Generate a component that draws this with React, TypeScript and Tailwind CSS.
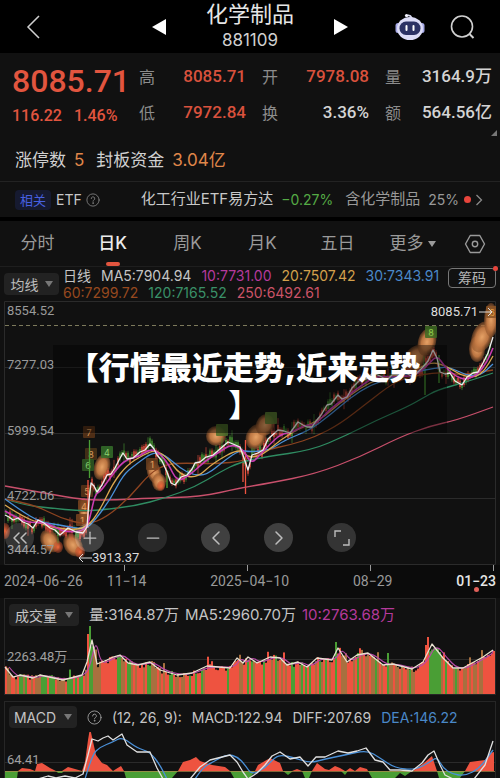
import React, { useState } from 'react';
import { ChevronLeft, ChevronRight, ChevronsLeft, Minus, Plus } from 'lucide-react';

type Point = [number, number];

const RED = '#ee5340';
const GREEN = '#4a9e35';
const MIXED = '#a8703f';

const ma5: Point[] = [[5,515],[9,517],[13,520],[18,518],[23,522],[28,524],[33,528],[38,520],[44,523],[50,528],[55,530],[60,535],[68,528],[76,532],[83,533],[87,527],[89,500],[91,483],[94,486],[97,492],[102,485],[107,475],[111,474],[115,468],[119,460],[123,453],[127,459],[133,458],[140,452],[145,450],[150,444],[154,449],[157,455],[162,461],[167,472],[171,483],[175,485],[181,477],[187,475],[192,469],[195,463],[200,462],[206,457],[213,455],[220,449],[228,442],[233,444],[240,447],[244,458],[248,470],[252,455],[258,453],[263,450],[268,439],[278,430],[284,431],[290,433],[298,422],[303,425],[307,427],[312,427],[316,421],[321,415],[327,405],[331,404],[338,395],[342,399],[347,397],[352,388],[360,380],[366,379],[373,373],[380,376],[387,380],[393,374],[400,375],[406,373],[413,377],[419,371],[423,367],[428,361],[433,350],[437,358],[440,372],[445,374],[450,373],[455,381],[462,385],[467,377],[473,373],[478,372],[483,363],[488,353],[493,337]];
const ma10: Point[] = [[5,511],[15,517],[30,523],[42,522],[55,527],[65,532],[85,531],[90,518],[95,494],[101,491],[110,478],[120,465],[128,459],[138,457],[150,449],[158,452],[168,463],[177,482],[190,475],[205,461],[218,453],[231,444],[243,449],[251,464],[260,455],[270,444],[281,434],[293,432],[305,425],[315,425],[330,409],[345,398],[362,385],[376,376],[392,377],[415,376],[427,366],[437,355],[444,366],[455,376],[466,380],[478,374],[487,362],[493,348]];
const ma20: Point[] = [[5,505],[20,515],[43,525],[67,530],[87,528],[100,510],[113,483],[127,465],[143,455],[155,450],[167,457],[180,475],[197,478],[213,463],[240,448],[248,458],[263,455],[280,440],[300,428],[320,420],[340,403],[360,388],[380,378],[410,373],[430,362],[445,365],[460,375],[475,378],[485,370],[493,356]];
const ma30: Point[] = [[5,499],[20,510],[40,522],[60,525],[85,530],[95,520],[110,500],[123,475],[135,465],[153,452],[165,455],[180,468],[193,475],[207,475],[225,460],[240,450],[250,452],[270,450],[285,440],[310,430],[330,415],[350,398],[370,385],[395,377],[415,372],[435,368],[450,367],[465,375],[480,376],[493,364]];
const ma60: Point[] = [[5,499],[33,504],[60,518],[87,525],[107,517],[130,497],[150,473],[167,464],[185,463],[215,464],[245,461],[265,450],[290,445],[315,437],[340,424],[367,403],[393,383],[410,377],[437,372],[463,375],[493,370]];
const ma120: Point[] = [[5,499],[23,505],[50,508],[80,511],[100,510],[135,506],[165,498],[195,487],[220,472],[240,462],[265,457],[312,450],[345,436],[377,420],[407,407],[423,398],[437,390],[463,383],[493,373]];
const ma250: Point[] = [[5,486],[45,493],[83,500],[117,500],[150,498],[200,497],[240,488],[270,483],[315,474],[360,457],[400,437],[430,426],[457,420],[493,407]];

const volumeMa: Point[] = [[5,667],[13,677],[20,675],[33,678],[40,675],[63,680],[82,675],[87,662],[92,640],[97,664],[107,660],[113,657],[120,655],[128,663],[138,665],[150,662],[160,670],[177,675],[192,673],[207,666],[230,668],[237,658],[243,663],[248,657],[257,663],[270,657],[280,658],[287,665],[298,662],[307,667],[317,658],[332,660],[338,648],[347,662],[357,655],[368,653],[383,665],[393,664],[412,669],[423,662],[432,644],[443,658],[453,668],[463,668],[472,663],[483,657],[493,650]];

const macdUp: Point[][] = [
  [[18,771],[22,768],[30,769],[35,771],[37,764],[42,763],[50,768],[56,771]],
  [[62,771],[68,767],[75,769],[82,771],[85,762],[88,740],[90,728],[92,737],[96,755],[102,763],[107,765],[113,771],[116,769],[121,766],[124,771]],
  [[178,771],[183,762],[190,760],[196,757],[200,761],[212,765],[225,767],[230,771]],
  [[255,771],[258,765],[270,758],[280,763],[283,771]],
  [[292,771],[297,769],[302,771]],
  [[312,771],[317,763],[325,769],[329,770],[335,766],[340,768],[345,771]],
  [[346,771],[350,768],[355,771],[360,767],[367,769],[368,771]],
  [[413,771],[424,763],[432,756],[437,771]],
  [[465,771],[470,762],[485,760],[490,753],[494,752],[494,771]],
];
const macdDown: Point[][] = [
  [[5,771],[18,771],[17,778],[5,778]],
  [[56,771],[64,771],[62,773],[58,773]],
  [[124,771],[178,771],[172,778],[126,778]],
  [[230,771],[255,771],[250,778],[234,778]],
  [[283,771],[293,771],[288,775]],
  [[302,771],[312,771],[309,778],[305,778]],
  [[341,771],[348,771],[345,775]],
  [[368,771],[412,771],[405,776],[400,773],[395,778],[372,778]],
  [[437,771],[465,771],[460,778],[439,778]],
];
const diff: Point[][] = [
  [[38,779],[48,776],[56,778],[65,776],[75,778],[83,774],[88,755],[92,739],[98,741],[103,738],[108,736],[113,740],[122,734],[127,745],[137,752],[150,752],[157,768],[163,779]],
  [[190,779],[200,767],[210,760],[222,757],[230,755],[237,762],[243,772],[248,779],[257,773],[265,765],[272,756],[280,752],[290,759],[300,757],[308,766],[316,757],[325,757],[338,751],[348,753],[357,751],[366,748],[375,760],[383,762],[390,770],[400,770],[412,771],[422,763],[428,755],[434,751],[440,765],[445,775],[453,779]],
  [[474,779],[485,765],[493,741]],
];
const dea: Point[][] = [
  [[85,779],[92,755],[100,747],[113,742],[122,737],[137,748],[150,752],[160,765],[167,779]],
  [[195,779],[203,767],[213,762],[227,754],[238,757],[245,765],[252,775],[265,768],[275,757],[282,755],[295,758],[310,763],[325,759],[345,755],[367,750],[380,758],[395,768],[415,770],[430,762],[437,757],[443,768],[452,774],[465,776],[480,768],[493,750]],
];

const toPoints = (points: Point[]) => points.map((p) => p.join(',')).join(' ');

const valueAt = (points: Point[], x: number) => {
  for (let i = 1; i < points.length; i++) {
    const [x0, y0] = points[i - 1];
    const [x1, y1] = points[i];
    if (x <= x1) return y0 + ((x - x0) / (x1 - x0)) * (y1 - y0);
  }
  return points[points.length - 1][1];
};

// Repeatable noise, so the candles look the same on every render
const noise = (n: number) => {
  const v = Math.sin(n * 12.9898) * 43758.5453;
  return v - Math.floor(v);
};

// Smooth curve through the points (quadratic, midpoints as joints)
const toCurve = (points: Point[], dx = 0) => {
  let d = `M${points[0][0] + dx} ${points[0][1]}`;
  for (let i = 1; i < points.length - 1; i++) {
    const mx = (points[i][0] + points[i + 1][0]) / 2;
    const my = (points[i][1] + points[i + 1][1]) / 2;
    d += `Q${points[i][0] + dx} ${points[i][1]} ${mx + dx} ${my}`;
  }
  const last = points[points.length - 1];
  return d + `L${last[0]} ${last[1]}`;
};

const candles = Array.from({ length: 243 }, (_, i) => {
  const x = 6 + i * 2;
  const y = valueAt(ma5, x) + (noise(i) - 0.5) * 6;
  const size = 1 + noise(i + 300) * 3;
  const wick = noise(i + 600) > 0.9 ? 7 : 2;
  return { x, y, size, wick, color: noise(i + 900) > 0.45 ? RED : GREEN };
});

const volumeBars = Array.from({ length: 245 }, (_, i) => {
  const x = 5 + i * 2;
  let top = valueAt(volumeMa, x) + (noise(i + 50) - 0.4) * 6;
  if (noise(i + 77) > 0.94) top -= 7;
  const n = noise(i + 41);
  let color = n > 0.5 ? RED : n > 0.2 ? MIXED : GREEN;
  if (x === 87) { top = 634; color = RED; }
  if (x === 89) { top = 626; color = GREEN; }
  if (x === 335) { top = 642; color = GREEN; }
  if (x === 387) { top = 653; color = GREEN; }
  if (x === 425) { top = 645; color = RED; }
  if (x === 427) { top = 637; color = RED; }
  if (x > 430 && x < 438) color = GREEN;
  if (x > 102 && x < 116) color = RED;
  if (x > 206 && x < 226) color = RED;
  if (x > 481) color = RED;
  return { x, top, color };
});

interface Blob {
  x: number;
  y: number;
  rx: number;
  ry: number;
  tilt?: number;
  hot?: boolean;
}

const blobs: Blob[] = [
  { x: 5, y: 531, rx: 5, ry: 8, hot: true },
  { x: 50, y: 541, rx: 9, ry: 12, tilt: -30 },
  { x: 58, y: 547, rx: 5, ry: 6, hot: true },
  { x: 73, y: 545, rx: 9, ry: 12, tilt: -30 },
  { x: 80, y: 552, rx: 5, ry: 6, hot: true },
  { x: 84, y: 512, rx: 5, ry: 14 },
  { x: 102, y: 467, rx: 8, ry: 13, tilt: 15 },
  { x: 154, y: 472, rx: 7, ry: 12, tilt: -15 },
  { x: 159, y: 482, rx: 7, ry: 9 },
  { x: 161, y: 486, rx: 4, ry: 5, hot: true },
  { x: 216, y: 436, rx: 10, ry: 10 },
  { x: 256, y: 437, rx: 10, ry: 13, tilt: 20 },
  { x: 265, y: 425, rx: 9, ry: 11, tilt: 20 },
  { x: 415, y: 358, rx: 10, ry: 15, tilt: 40 },
  { x: 427, y: 342, rx: 9, ry: 14, tilt: 15 },
  { x: 477, y: 349, rx: 8, ry: 13 },
  { x: 482, y: 337, rx: 10, ry: 16, tilt: 20 },
  { x: 491, y: 320, rx: 7, ry: 17 },
];

const badges = [
  { x: 89, y: 432, text: '7', fill: '#5a3418', ink: '#d99a5c' },
  { x: 91, y: 454, text: '8', fill: '#4a3418', ink: '#d99a5c' },
  { x: 88, y: 465, text: '6', fill: '#2f5a22', ink: '#7fc46a' },
  { x: 107, y: 452, text: '4', fill: '#35702a', ink: '#8fd070' },
  { x: 87, y: 491, text: '5', fill: '#5a3418', ink: '#d99a5c' },
  { x: 84, y: 506, text: '4', fill: '#7a4420', ink: '#e8a060' },
  { x: 82, y: 520, text: '1', fill: '#7a4420', ink: '#e8a060' },
  { x: 152, y: 464, text: '1', fill: '#6a3e1e', ink: '#e8a060' },
  { x: 222, y: 430, text: '', fill: '#4c702a', ink: '#a0b060' },
  { x: 271, y: 418, text: '', fill: '#5c8032', ink: '#a0b060' },
  { x: 431, y: 332, text: '8', fill: '#3d6a22', ink: '#8fd04a' },
  { x: 492, y: 312, text: '6', fill: '#8a5426', ink: '#e8a040' },
];

const Caret = () => (
  <svg viewBox="0 0 8 6" className="h-[6px] w-2 shrink-0" fill="currentColor">
    <path d="M0 0h8L4 6z" />
  </svg>
);

const Help = ({ className = '' }: { className?: string }) => (
  <svg viewBox="0 0 16 16" className={`shrink-0 ${className}`} fill="none" stroke="currentColor" strokeLinecap="round">
    <circle cx="8" cy="8" r="7" />
    <path d="M6 6.4a2 2 0 1 1 3 1.7c-.7.4-1 .7-1 1.4" />
    <circle cx="8" cy="11.5" r=".4" fill="currentColor" />
  </svg>
);

const Robot = () => (
  <svg viewBox="0 0 30 28" className="h-7 w-[30px]">
    <path d="M11 3q4-2 6 2" stroke="#d8daf0" strokeWidth="1.6" fill="none" />
    <circle cx="11.5" cy="2.500" r="1.6" fill="#f4f4ff" />
    <rect x="0.5" y="10" width="5" height="10" rx="2.5" fill="#a5a8e6" />
    <rect x="24.500" y="10" width="5" height="10" rx="2.500" fill="#a5a8e6" />
    <ellipse cx="15" cy="15.500" rx="13" ry="11.500" fill="#dcdcf6" />
    <rect x="4.500" y="8.500" width="21" height="13.500" rx="6.500" fill="#2c3264" />
    <path d="M11.500 13v4M18.500 13v4" stroke="#fff" strokeWidth="2" strokeLinecap="round" />
  </svg>
);

const Header = () => (
  <header className="grid h-[53px] grid-cols-[1fr_auto_1fr] items-center bg-black">
    <div className="flex items-center justify-between pl-[25px]">
      <button aria-label="返回" className="text-[#d0d0d0]">
        <svg viewBox="0 0 16 26" className="h-[26px] w-4" fill="none" stroke="currentColor" strokeWidth="1.5">
          <path d="M14 2 3 13l11 11" />
        </svg>
      </button>
      <button aria-label="上一个" className="mr-10 text-white">
        <svg viewBox="0 0 14 16" className="h-4 w-[14px]" fill="currentColor"><path d="M14 0v16L0 8z" /></svg>
      </button>
    </div>
    <div className="text-center">
      <h1 className="text-[22px] leading-[26px] text-[#e6e6e6]">化学制品</h1>
      <p className="text-[17px] leading-[26px] text-[#d0d0d0]">881109</p>
    </div>
    <div className="flex items-center justify-between pr-[25px]">
      <button aria-label="下一个" className="ml-10 text-white">
        <svg viewBox="0 0 14 16" className="h-4 w-[14px]" fill="currentColor"><path d="M0 0v16l14-8z" /></svg>
      </button>
      <div className="flex items-center gap-6">
        <button aria-label="助手"><Robot /></button>
        <button aria-label="搜索" className="text-[#d0d0d0]">
          <svg viewBox="0 0 26 26" className="h-[26px] w-[26px]" fill="none" stroke="currentColor" strokeWidth="1.6">
            <circle cx="13" cy="12.500" r="10.500" />
            <path d="m20.500 20 4 4" strokeWidth="2" />
          </svg>
        </button>
      </div>
    </div>
  </header>
);

const stats = [
  { label: '高', value: '8085.71', up: true },
  { label: '开', value: '7978.08', up: true },
  { label: '量', value: '3164.9万', up: false },
  { label: '低', value: '7972.84', up: true },
  { label: '换', value: '3.36%', up: false },
  { label: '额', value: '564.56亿', up: false },
];

const Quote = () => (
  <section className="relative">
    <div className="flex h-[88px] items-center pr-2 pb-1 pl-3">
      <div className="w-[127px] shrink-0 text-[#e2553f]">
        <div className="font-[Roboto] text-[32px] leading-[42px] font-medium">8085.71</div>
        <div className="flex gap-3 font-[Roboto] text-[16px] leading-7 font-medium">
          <span>116.22</span>
          <span>1.46%</span>
        </div>
      </div>
      <dl className="grid flex-1 grid-cols-3 gap-x-4 whitespace-nowrap">
        {stats.map((s) => (
          <div key={s.label} className="flex h-9 items-center justify-between">
            <dt className="text-[16px] text-[#8c8c8c]">{s.label}</dt>
            <dd className={`font-[Roboto,'Noto_Sans_CJK_SC'] text-[17px] font-medium ${s.up ? 'text-[#d9513d]' : 'text-[#d4d4d4]'}`}>
              {s.value}
            </dd>
          </div>
        ))}
      </dl>
    </div>
    <svg viewBox="0 0 6 6" className="absolute top-[77px] right-[3px] h-[6px] w-[6px]" fill="#777"><path d="M6 0v6H0z" /></svg>
    <div className="flex h-10 items-center gap-2 px-[15px] text-[17px] text-[#d0d0d0]">
      <span>涨停数</span>
      <span className="text-[#e0874a]">5</span>
      <span className="ml-1">封板资金</span>
      <span className="text-[#e0874a]">3.04亿</span>
    </div>
    <div className="flex h-9 items-center border-t border-[#232323] pr-[17px] pl-[15px] text-[15px] whitespace-nowrap text-[#c8c8c8]">
      <span className="rounded-sm bg-[#161a30] px-[5px] text-[13px] leading-5 text-[#4760e0]">相关</span>
      <span className="ml-[5px] text-[14px]">ETF</span>
      <Help className="ml-1 h-[14px] w-[14px] text-[#808080]" />
      <a href="#etf" className="ml-auto flex items-center">
        <span>化工行业ETF易方达</span>
        <span className="ml-2 text-[14px] text-[#55ab45]">−0.27%</span>
        <span className="ml-3 text-[#999]">含化学制品</span>
        <span className="ml-2 text-[14px] text-[#999]">25%</span>
        <span className="ml-[5px] h-[7px] w-[7px] rounded-full bg-[#e8453c]" />
        <svg viewBox="0 0 8 12" className="ml-1 h-3 w-2" fill="none" stroke="#8a8a8a" strokeWidth="1.300"><path d="m1.500 1 5 5-5 5" /></svg>
      </a>
    </div>
  </section>
);

const tabs = ['分时', '日K', '周K', '月K', '五日'];

const Tabs = () => {
  const [active, setActive] = useState('日K');
  return (
    <nav className="flex h-[45px] text-[17px] text-[#9a9a9a]">
      {tabs.map((tab) => (
        <button
          key={tab}
          onClick={() => setActive(tab)}
          className={`relative flex-1 ${tab === active ? 'font-medium text-[#ececec]' : ''}`}
        >
          {tab}
          {tab === active && <span className="absolute bottom-0 left-1/2 h-1 w-[14px] -translate-x-1/2 rounded-full bg-[#e2553f]" />}
        </button>
      ))}
      <button className="flex flex-1 items-center justify-center gap-1">
        更多 <Caret />
      </button>
      <button aria-label="设置" className="flex w-[50px] items-center justify-center">
        <svg viewBox="0 0 22 20" className="h-5 w-[22px]" fill="none" stroke="currentColor" strokeWidth="1.400" strokeLinejoin="round">
          <path d="M6.200 1.500h9.600L20.500 10l-4.700 8.500H6.200L1.500 10z" />
          <circle cx="11" cy="10" r="2.700" />
        </svg>
      </button>
    </nav>
  );
};

const Legend = () => (
  <div className="flex h-[35px] items-center border-t border-[#1e1e1e] pr-1 pl-1">
    <button className="flex h-[22px] w-[55px] shrink-0 items-center justify-center gap-[6px] rounded-sm bg-[#222] text-[14px] text-[#bbb]">
      均线 <span className="text-[#777]"><Caret /></span>
    </button>
    <div className="ml-1 flex-1 text-[14px] leading-[17px] whitespace-nowrap">
      <div className="flex gap-[10px] text-[#c4c4c4]">
        <span>日线</span>
        <span>MA5:7904.94</span>
        <span className="text-[#b53a9c]">10:7731.00</span>
        <span className="text-[#d3a04c]">20:7507.42</span>
        <span className="text-[#4a88c8]">30:7343.91</span>
      </div>
      <div className="flex gap-[10px]">
        <span className="text-[#97491f]">60:7299.72</span>
        <span className="text-[#3a9068]">120:7165.52</span>
        <span className="text-[#cc5468]">250:6492.61</span>
      </div>
    </div>
    <button className="relative mb-3 h-5 w-12 shrink-0 rounded-sm border border-[#777] text-[14px] leading-[18px] text-[#b4b4b4]">
      筹码
      <span className="absolute -top-[3px] -right-[3px] h-[5px] w-[5px] rounded-full bg-[#e8453c]" />
    </button>
  </div>
);

const PriceChart = () => (
  <div className="relative px-1">
    <svg viewBox="4 301 492 264" className="block w-full" fill="none">
      <defs>
        <radialGradient id="blob">
          <stop offset="0" stopColor="#e6a266" />
          <stop offset=".6" stopColor="#c47a44" stopOpacity=".95" />
          <stop offset="1" stopColor="#8a5028" stopOpacity=".5" />
        </radialGradient>
        <radialGradient id="hot">
          <stop offset="0" stopColor="#f06a3c" />
          <stop offset="1" stopColor="#c04a28" stopOpacity=".4" />
        </radialGradient>
      </defs>
      <path d="M4.500 301.500h491v263h-491zM5 367.500h490M5 433.500h490M5 498.500h490" stroke="#2b2b2b" />
      <path d="M5 325.500h490" stroke="#7d7a5c" strokeDasharray="4 3" />
      {blobs.map((b, i) => (
        <ellipse key={i} cx={b.x} cy={b.y} rx={b.rx} ry={b.ry} fill={b.hot ? 'url(#hot)' : 'url(#blob)'} transform={`rotate(${b.tilt ?? 0} ${b.x} ${b.y})`} />
      ))}
      {badges.map((b, i) => (
        <g key={i}>
          <rect x={b.x - 6} y={b.y - 6} width="12" height="12" rx="1" fill={b.fill} opacity=".85" />
          <text x={b.x} y={b.y + 4} textAnchor="middle" fontSize="9" fill={b.ink}>{b.text}</text>
        </g>
      ))}
      {candles.map((c) => (
        <path key={c.x} d={`M${c.x} ${c.y - c.size - c.wick}V${c.y + c.size + c.wick}`} stroke={c.color} strokeWidth="0.600" />
      ))}
      {candles.map((c) => (
        <path key={c.x} d={`M${c.x} ${c.y - c.size}V${c.y + c.size}`} stroke={c.color} strokeWidth="1.200" />
      ))}
      <path d="M89.500 440V478M167 470v18M425 365v30M439 355v28" stroke={GREEN} strokeWidth="1.300" />
      <path d="M88 480V528M245.500 440V494M243 450v32" stroke={RED} strokeWidth="1.300" />
      <path d={toCurve(ma250)} stroke="#c9506c" strokeWidth="1.300" />
      <path d={toCurve(ma120)} stroke="#2f8c62" strokeWidth="1.300" />
      <path d={toCurve(ma60)} stroke="#8e4420" strokeWidth="1.300" />
      <path d={toCurve(ma30)} stroke="#4a90d8" strokeWidth="1.300" />
      <path d={toCurve(ma20)} stroke="#dca850" strokeWidth="1.300" />
      <path d={toCurve(ma10)} stroke="#c83cb0" strokeWidth="1.600" />
      <polyline points={toPoints(ma5)} stroke="#eee" strokeWidth="1.300" strokeLinejoin="round" />
      <path d="M479 312h13m-4-4 4 4-4 4M92 558H79m4-4-4 4 4 4" stroke="#ddd" />
    </svg>
    <div className="font-[Roboto] text-[13px] leading-4 text-[#9a9a9a]">
      <span className="absolute top-[2px] left-[7px]">8554.52</span>
      <span className="absolute top-[56px] left-[7px]">7277.03</span>
      <span className="absolute top-[122px] left-[7px]">5999.54</span>
      <span className="absolute top-[187px] left-[7px]">4722.06</span>
      <span className="absolute top-[241px] left-[7px]">3444.57</span>
      <span className="absolute top-[3px] right-[22px] text-[#ddd]">8085.71</span>
      <span className="absolute top-[249px] left-[92px] text-[#ddd]">3913.37</span>
    </div>
    <div className="absolute top-[222px] left-[5px] flex gap-[34px] text-[#bdbdbd]">
      <button aria-label="最早" className="mr-[7px] flex h-[29px] w-[29px] items-center justify-center rounded-full bg-white/15">
        <ChevronsLeft size={24} strokeWidth={1.5} />
      </button>
      <button aria-label="放大" className="flex h-[29px] w-[29px] items-center justify-center rounded-full bg-white/20">
        <Plus size={20} strokeWidth={1.5} />
      </button>
      <button aria-label="缩小" className="flex h-[29px] w-[29px] items-center justify-center rounded-full bg-white/10">
        <Minus size={20} strokeWidth={1.5} />
      </button>
      <button aria-label="左移" className="flex h-[29px] w-[29px] items-center justify-center rounded-full bg-white/20">
        <ChevronLeft size={24} strokeWidth={1.5} />
      </button>
      <button aria-label="右移" className="flex h-[29px] w-[29px] items-center justify-center rounded-full bg-white/20">
        <ChevronRight size={24} strokeWidth={1.5} />
      </button>
      <button aria-label="全屏" className="flex h-[29px] w-[29px] items-center justify-center rounded-full bg-white/15">
        <svg viewBox="0 0 16 16" className="h-4 w-4" fill="none" stroke="currentColor" strokeWidth="1.400">
          <path d="M1 7V1h6M15 9v6H9" />
        </svg>
      </button>
    </div>
    <div className="absolute inset-x-[53px] top-[44px] flex h-[88px] flex-col items-center bg-black/40 pt-1 text-center text-[31px] leading-[37px] font-black text-white">
      <span className="pr-3 whitespace-nowrap">【行情最近走势,近来走势</span>
      <span className="pr-3">】</span>
    </div>
  </div>
);

const Dates = () => (
  <div className="bg-[#0b0b0b] px-1">
    <svg viewBox="4 0 492 6" className="block w-full" stroke="#999"><path d="M124.500 0v6M247.500 0v6M370.500 0v6M493.500 0v6" /></svg>
    <div className="relative flex h-[27px] justify-between pt-[2px] font-[Roboto] text-[14px] leading-4 text-[#999]">
      <span>2024−06−26</span>
      <span>11−14</span>
      <span className="ml-10">2025−04−10</span>
      <span className="ml-10">08−29</span>
      <span className="ml-10 font-medium text-[#e6e6e6]">01−23</span>
      <span className="absolute right-[17px] bottom-[6px] h-[5px] w-[5px] rounded-full bg-[#e0605a]" />
    </div>
  </div>
);

const VolumePanel = () => (
  <section className="mx-1 border border-[#262626]">
    <div className="flex h-[30px] items-center gap-[6px] pt-[2px] pl-1 text-[15px] whitespace-nowrap text-[#c4c4c4]">
      <button className="mr-1 flex h-[22px] w-[70px] items-center justify-center gap-2 rounded-sm bg-[#222] text-[14px]">
        成交量 <span className="text-[#777]"><Caret /></span>
      </button>
      <span>量:3164.87万</span>
      <span>MA5:2960.70万</span>
      <span className="text-[#b53a9c]">10:2763.68万</span>
    </div>
    <div className="relative">
      <svg viewBox="5 629 490 65" className="block w-full overflow-visible" fill="none">
        <path d="M5 659.500h490" stroke="#2b2b2b" />
        {volumeBars.map((b) => (
          <rect key={b.x} x={b.x} y={b.top} width="2" height={694 - b.top} fill={b.color} />
        ))}
        <path d={toCurve(volumeMa, 4)} stroke="#b84aa8" strokeWidth="1.200" />
        <polyline points={toPoints(volumeMa)} stroke="#e8e0d0" strokeWidth="1.300" strokeLinejoin="round" />
      </svg>
      <span className="absolute top-5 left-[2px] font-[Roboto,'Noto_Sans_CJK_SC'] text-[13px] leading-4 text-[#a0a0a0]">2263.48万</span>
    </div>
  </section>
);

const MacdPanel = () => (
  <section className="mx-1 mt-[6px] border border-b-0 border-[#262626]">
    <div className="flex h-[30px] items-center gap-[10px] pl-1 text-[14px] whitespace-nowrap text-[#c4c4c4]">
      <button className="flex h-[22px] w-[68px] items-center justify-center gap-2 rounded-sm bg-[#222]">
        MACD <span className="text-[#777]"><Caret /></span>
      </button>
      <Help className="h-[15px] w-[15px] text-[#999]" />
      <span>(12, 26, 9):</span>
      <span>MACD:122.94</span>
      <span>DIFF:207.69</span>
      <span className="text-[#4a88c8]">DEA:146.22</span>
    </div>
    <div className="relative">
      <svg viewBox="5 732 490 46" className="block w-full" fill="none">
        <path d="M5 762.500h490" stroke="#2b2b2b" />
        {macdUp.map((p, i) => <polygon key={i} points={toPoints(p)} fill={RED} />)}
        {macdDown.map((p, i) => <polygon key={i} points={toPoints(p)} fill={GREEN} />)}
        <path d="M5 771.500h490" stroke="#b08a4a" strokeWidth="0.700" />
        {dea.map((p, i) => <path key={i} d={toCurve(p)} stroke="#4a90d8" strokeWidth="1.300" />)}
        {diff.map((p, i) => <polyline key={i} points={toPoints(p)} stroke="#e0e0e0" strokeWidth="1.300" strokeLinejoin="round" />)}
      </svg>
      <span className="absolute top-5 left-[2px] font-[Roboto] text-[13px] leading-4 text-[#a0a0a0]">64.41</span>
    </div>
  </section>
);

const App: React.FC = () => (
  <div className="min-h-screen overflow-hidden bg-[#111] font-[Inter,'Noto_Sans_CJK_SC',sans-serif]">
    <Header />
    <Quote />
    <div className="h-1 bg-black" />
    <Tabs />
    <Legend />
    <PriceChart />
    <Dates />
    <VolumePanel />
    <MacdPanel />
  </div>
);

export default App;
